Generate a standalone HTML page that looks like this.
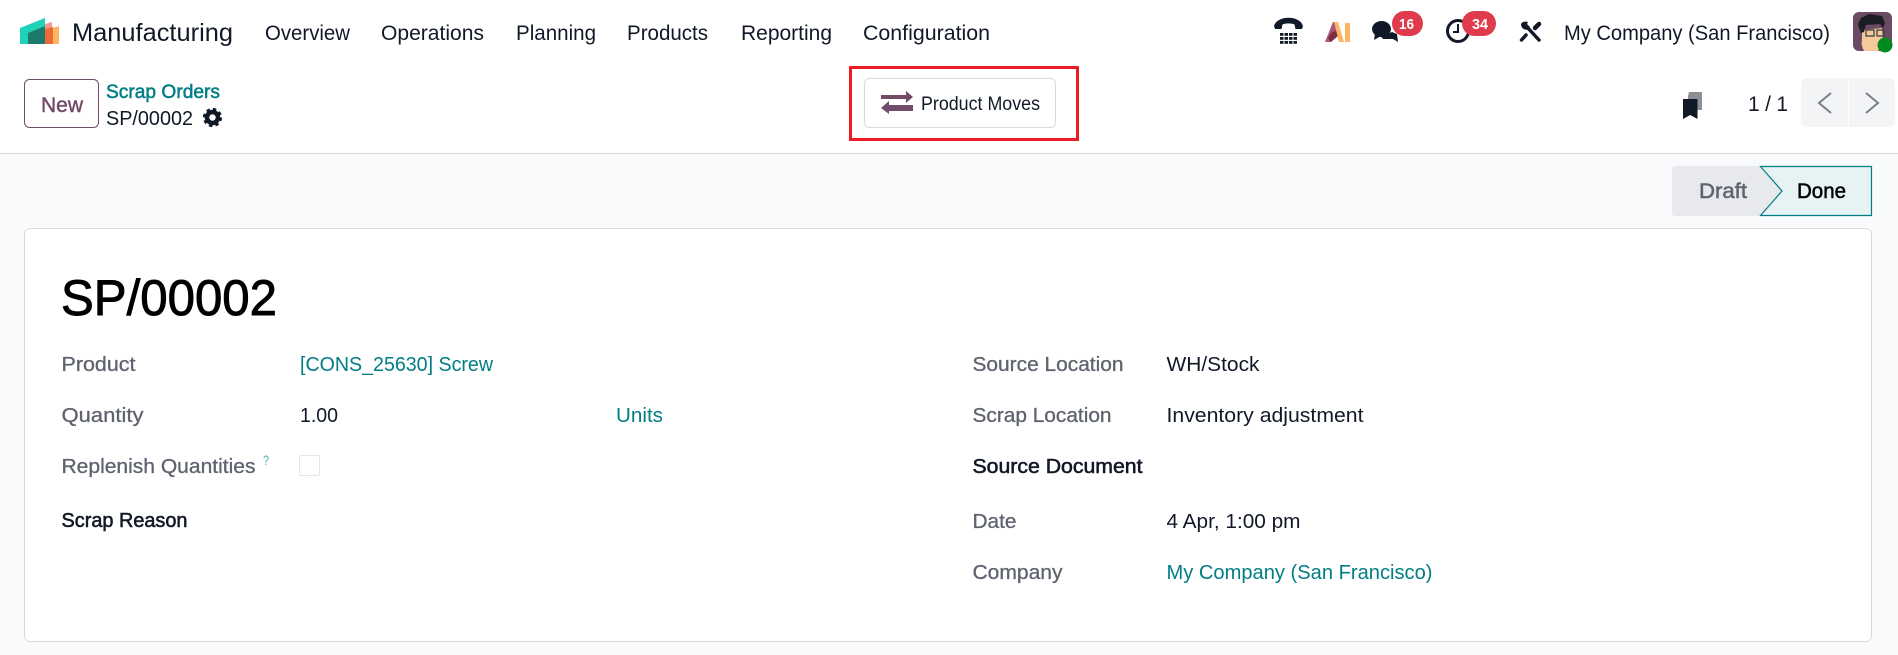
<!DOCTYPE html>
<html lang="en">
<head>
<meta charset="utf-8">
<title>Scrap Orders</title>
<style>
html,body{margin:0;padding:0;background:#f9fafb;width:1898px;height:655px;overflow:hidden}
svg{display:block}
text{font-family:"Liberation Sans",sans-serif;fill:#111827}
.nav{font-size:21px}
.lb{font-size:20px;fill:#5f636f;stroke:#5f636f;stroke-width:.3px}
.v{font-size:20px}
.l{font-size:20px;fill:#017e84}
.b{font-size:20px;stroke:#111827;stroke-width:.55px}
</style>
</head>
<body>
<svg width="1898" height="655" viewBox="0 0 1898 655" xmlns="http://www.w3.org/2000/svg">
<rect width="1898" height="655" fill="#f9fafb"/>
<rect width="1898" height="153" fill="#fff"/>
<rect y="153" width="1898" height="1" fill="#d8dadd"/>

<!-- logo -->
<polygon points="20,28 45,18 45,44 20,44" fill="#1ed3b8"/>
<polygon points="28,33 45,26 45,44 28,44" fill="#1f7a6e"/>
<polygon points="45,24 52,22 53,44 45,44" fill="#f29a94"/>
<polygon points="45,29 53,27 53,44 45,44" fill="#ef6b35"/>
<polygon points="53,28 59,26 59,44 53,44" fill="#fdb55f"/>

<text x="72" y="41" font-size="25" textLength="161" lengthAdjust="spacingAndGlyphs">Manufacturing</text>
<text class="nav" x="265" y="40" textLength="85" lengthAdjust="spacingAndGlyphs">Overview</text>
<text class="nav" x="381" y="40" textLength="103" lengthAdjust="spacingAndGlyphs">Operations</text>
<text class="nav" x="516" y="40" textLength="80" lengthAdjust="spacingAndGlyphs">Planning</text>
<text class="nav" x="627" y="40" textLength="81" lengthAdjust="spacingAndGlyphs">Products</text>
<text class="nav" x="741" y="40" textLength="91" lengthAdjust="spacingAndGlyphs">Reporting</text>
<text class="nav" x="863" y="40" textLength="127" lengthAdjust="spacingAndGlyphs">Configuration</text>

<!-- phone -->
<path d="M1274 26C1277 15 1300 15 1303 26l-1 3h-6.500l-1-4.500c-3.500-1.500-8.500-1.500-12 0l-1 4.500H1275z" fill="#111827"/>
<g fill="#111827">
<rect x="1280" y="33" width="3.500" height="2.800"/><rect x="1284.500" y="33" width="3.500" height="2.800"/><rect x="1289" y="33" width="3.500" height="2.800"/><rect x="1293.500" y="33" width="3.500" height="2.800"/>
<rect x="1280" y="37" width="3.500" height="2.800"/><rect x="1284.500" y="37" width="3.500" height="2.800"/><rect x="1289" y="37" width="3.500" height="2.800"/><rect x="1293.500" y="37" width="3.500" height="2.800"/>
<rect x="1280" y="41" width="3.500" height="2.800"/><rect x="1284.500" y="41" width="3.500" height="2.800"/><rect x="1289" y="41" width="3.500" height="2.800"/><rect x="1293.500" y="41" width="3.500" height="2.800"/>
</g>

<!-- AI -->
<polygon points="1325,42 1333,22 1337,22 1337,33 1331,42" fill="#a8577e"/>
<polygon points="1331,33 1337,30 1338,36 1331,42 1328,38" fill="#7a2e3e"/>
<polygon points="1334,22 1338,22 1344,42 1339,42" fill="#fdb55f"/>
<rect x="1345" y="23" width="5" height="19" fill="#fdb55f"/>

<!-- chat -->
<path d="M1398 42l-5-3h-9c-2 0-3-2-2-3l10-4 5 2z" fill="#111827"/>
<ellipse cx="1381.500" cy="29" rx="9.500" ry="8" fill="#111827"/>
<path d="M1375 34l-1 6 7-4z" fill="#111827"/>
<rect x="1392" y="11" width="31" height="25" rx="12.500" fill="#e03b4c"/>
<text x="1399" y="29" font-size="15" font-weight="bold" style="fill:#fff" textLength="15" lengthAdjust="spacingAndGlyphs">16</text>

<!-- clock -->
<circle cx="1458" cy="31" r="10.500" fill="none" stroke="#111827" stroke-width="3"/>
<path d="M1458 24v8h-5" fill="none" stroke="#111827" stroke-width="2"/>
<rect x="1462" y="11" width="34" height="25" rx="12.500" fill="#e03b4c"/>
<text x="1472" y="29" font-size="15" font-weight="bold" style="fill:#fff" textLength="16" lengthAdjust="spacingAndGlyphs">34</text>

<!-- tools -->
<path d="M1539 24l-4 4" stroke="#111827" stroke-width="4.500" stroke-linecap="round"/>
<path d="M1526 35l-4.500 5" stroke="#111827" stroke-width="3.500" stroke-linecap="round"/>
<path d="M1539 40L1527 27" stroke="#fff" stroke-width="6"/>
<path d="M1539 40L1527 27" stroke="#111827" stroke-width="3.500" stroke-linecap="round"/>
<path d="M1521 24c0 4 3 6 7 6l2-3-3-3 1-2c-3-1-6 0-7 2z" fill="#111827"/>

<text class="nav" x="1564" y="40" textLength="266" lengthAdjust="spacingAndGlyphs">My Company (San Francisco)</text>

<!-- avatar -->
<rect x="1853" y="12" width="39" height="39" rx="6" fill="#6b4a63"/>
<path d="M1864 51c-2-4-3-8-2-11l0-10 20-2 1 14-5 9z" fill="#f6c99c"/>
<path d="M1858 24l3-6 8-4 13 2 3 7-2 5-3-4-14 1-2 7-3 1-2-5z" fill="#1d1d26"/>
<rect x="1866" y="30" width="8" height="6" fill="none" stroke="#444" stroke-width="1.300"/>
<rect x="1877" y="30" width="7" height="6" fill="none" stroke="#444" stroke-width="1.300"/>
<circle cx="1885" cy="45" r="7.500" fill="#008a1e"/>

<!-- breadcrumb row -->
<rect x="24.500" y="79.500" width="74" height="48" rx="5" fill="#fff" stroke="#714b67"/>
<text x="41" y="112" font-size="21" style="fill:#714b67;stroke:#714b67;stroke-width:.45px" textLength="42" lengthAdjust="spacingAndGlyphs">New</text>
<text x="106" y="98" font-size="19" style="fill:#017e84;stroke:#017e84;stroke-width:.5px" textLength="114" lengthAdjust="spacingAndGlyphs">Scrap Orders</text>
<text x="106" y="125" font-size="20" textLength="87" lengthAdjust="spacingAndGlyphs">SP/00002</text>
<circle cx="212.500" cy="117.500" r="5.500" fill="none" stroke="#111827" stroke-width="4.500"/>
<circle cx="212.500" cy="117.500" r="8" fill="none" stroke="#111827" stroke-width="3.200" stroke-dasharray="3.300 3"/>

<!-- Product Moves -->
<rect x="850.500" y="67.500" width="227" height="72" fill="none" stroke="#ed1c24" stroke-width="3"/>
<rect x="864.500" y="78.500" width="191" height="49" rx="5" fill="#fff" stroke="#d8dadd"/>
<path d="M881 95h25v-4l7 6-7 6v-4h-25z" fill="#714b67"/>
<path d="M913 105h-24v-4l-8 7 8 6v-3h24z" fill="#714b67"/>
<text x="921" y="110" font-size="19" textLength="119" lengthAdjust="spacingAndGlyphs">Product Moves</text>

<!-- bookmark -->
<path d="M1688 99v-3l1-4h13v18l-5 0z" fill="#8c8f96"/>
<path d="M1683 99h14.500v20l-7.250-4-7.250 4z" fill="#111827"/>

<!-- pager -->
<text x="1748" y="111" font-size="21" textLength="40" xml:space="preserve">1 / 1</text>
<rect x="1801" y="78" width="94" height="49" rx="5" fill="#f3f4f6"/>
<rect x="1848" y="78" width="1" height="49" fill="#fff"/>
<path d="M1831 93l-12 10 12 10" fill="none" stroke="#7b7e85" stroke-width="2"/>
<path d="M1866 93l12 10-12 10" fill="none" stroke="#7b7e85" stroke-width="2"/>

<!-- status bar -->
<path d="M1672 169a3 3 0 0 1 3-3h85l22 25-22 25h-85a3 3 0 0 1-3-3z" fill="#e7e9ed"/>
<path d="M1760.500 166.500h111v49h-111l21.500-24.500z" fill="#e6f2f3" stroke="#017e84" stroke-width="1.200"/>
<text x="1699" y="198" font-size="21" style="fill:#5f636f;stroke:#5f636f;stroke-width:.5px" textLength="48" lengthAdjust="spacingAndGlyphs">Draft</text>
<text x="1797" y="198" font-size="21" style="fill:#000;stroke:#000;stroke-width:.5px" textLength="49" lengthAdjust="spacingAndGlyphs">Done</text>

<!-- card -->
<rect x="24.500" y="228.500" width="1847" height="413" rx="6" fill="#fff" stroke="#d8dadd"/>
<text x="61" y="315" font-size="50" style="fill:#000;stroke:#000;stroke-width:.9px" textLength="216" lengthAdjust="spacingAndGlyphs">SP/00002</text>

<text class="lb" x="61.500" y="371" textLength="74" lengthAdjust="spacingAndGlyphs">Product</text>
<text class="l" x="300" y="371" textLength="193" lengthAdjust="spacingAndGlyphs">[CONS_25630] Screw</text>
<text class="lb" x="61.500" y="422" textLength="82" lengthAdjust="spacingAndGlyphs">Quantity</text>
<text class="v" x="300" y="422" textLength="38" lengthAdjust="spacingAndGlyphs">1.00</text>
<text class="l" x="616" y="422" textLength="47" lengthAdjust="spacingAndGlyphs">Units</text>
<text class="lb" x="61.500" y="473" textLength="194" lengthAdjust="spacingAndGlyphs">Replenish Quantities</text>
<text x="263" y="465" font-size="14" style="fill:#4fb0b5" textLength="6" lengthAdjust="spacingAndGlyphs">?</text>
<rect x="299.500" y="455.500" width="20" height="20" rx="1" fill="#fff" stroke="#e3e5e8"/>
<text class="b" x="61.500" y="527" textLength="126" lengthAdjust="spacingAndGlyphs">Scrap Reason</text>

<text class="lb" x="972.500" y="371" textLength="151" lengthAdjust="spacingAndGlyphs">Source Location</text>
<text class="v" x="1166.500" y="371" textLength="93" lengthAdjust="spacingAndGlyphs">WH/Stock</text>
<text class="lb" x="972.500" y="422" textLength="139" lengthAdjust="spacingAndGlyphs">Scrap Location</text>
<text class="v" x="1166.500" y="422" textLength="197" lengthAdjust="spacingAndGlyphs">Inventory adjustment</text>
<text class="b" x="972.500" y="473" textLength="170" lengthAdjust="spacingAndGlyphs">Source Document</text>
<text class="lb" x="972.500" y="528" textLength="44" lengthAdjust="spacingAndGlyphs">Date</text>
<text class="v" x="1166.500" y="528" textLength="134" lengthAdjust="spacingAndGlyphs">4 Apr, 1:00 pm</text>
<text class="lb" x="972.500" y="579" textLength="90" lengthAdjust="spacingAndGlyphs">Company</text>
<text class="l" x="1166.500" y="579" textLength="266" lengthAdjust="spacingAndGlyphs">My Company (San Francisco)</text>
</svg>
</body>
</html>
